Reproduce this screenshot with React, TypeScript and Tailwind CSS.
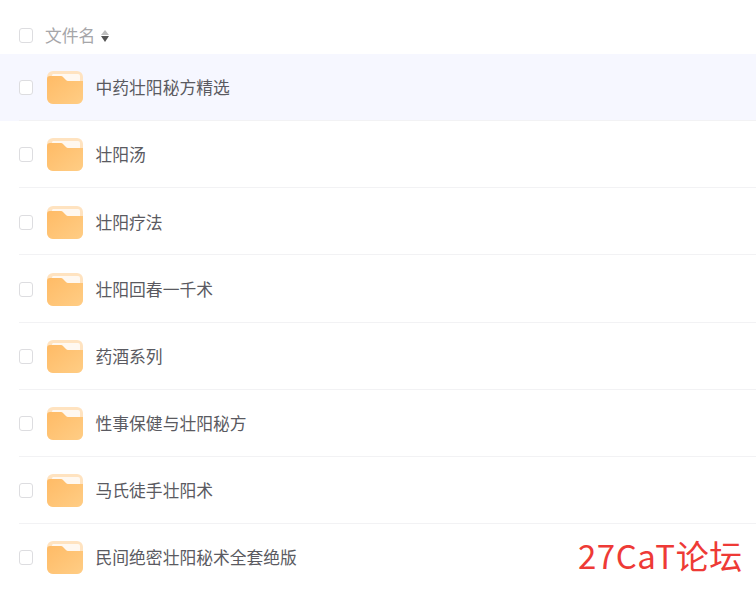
const folders = [
  "中药壮阳秘方精选",
  "壮阳汤",
  "壮阳疗法",
  "壮阳回春一千术",
  "药酒系列",
  "性事保健与壮阳秘方",
  "马氏徒手壮阳术",
  "民间绝密壮阳秘术全套绝版",
];

const FolderIcon = ({ id }: { id: number }) => (
  <svg width="36" height="33" viewBox="0 0 36 33" className="block shrink-0">
    <defs>
      <linearGradient id={`folder-${id}`} x1="0" y1="0" x2="1" y2="1">
        <stop offset="0" stopColor="#ffbb66" />
        <stop offset="1" stopColor="#ffcd85" />
      </linearGradient>
    </defs>
    <rect x="0" y="0" width="36" height="33" rx="6" fill="#ffe3c0" />
    <path d="M6 3 h25 a2 2 0 0 1 2 2 v5 h-28 v-5 a2 2 0 0 1 1 -2 z" fill="#fff8f0" />
    <path
      d="M0 8 a3 3 0 0 1 3 -3 h11 a3 3 0 0 1 2 1 l3 3 a3 3 0 0 0 2 1 h15 v17 a6 6 0 0 1 -6 6 h-24 a6 6 0 0 1 -6 -6 z"
      fill={`url(#folder-${id})`}
    />
  </svg>
);

const Checkbox = () => (
  <span className="w-[14px] h-[15px] shrink-0 rounded-[3px] border border-[#dddde0] bg-white" />
);

export default function App() {
  return (
    <div className="relative w-[756px] h-[596px] overflow-hidden bg-white font-['Noto_Sans_CJK_SC','Liberation_Sans',sans-serif] text-[16.8px]">
      <div className="h-[54px] pl-[19px] pt-[17px] flex items-center">
        <Checkbox />
        <span className="ml-[12px] text-[#a6a6a9]">文件名</span>
        <span className="ml-[6px] flex flex-col gap-[1px]">
          <span className="w-0 h-0 border-x-[4.5px] border-x-transparent border-b-[5px] border-b-[#bdbdbd]" />
          <span className="w-0 h-0 border-x-[4.5px] border-x-transparent border-t-[6px] border-t-[#555555]" />
        </span>
      </div>
      {folders.map((name, i) => (
        <div key={name} className={`pl-[19px] ${i === 0 ? "bg-[#f6f7ff]" : ""}`}>
          <div
            className={`h-[67.14px] pt-[1.6px] flex items-center border-b ${
              i === folders.length - 1 ? "border-transparent" : "border-[#f2f2f4]"
            }`}
          >
            <Checkbox />
            <span className="ml-[14px]">
              <FolderIcon id={i} />
            </span>
            <span className="ml-[12.5px] text-[#5a5a61]">{name}</span>
          </div>
        </div>
      ))}
      <div className="absolute left-[578px] top-[532px] text-[33px] leading-[46px] tracking-[0.5px] text-[#ee3a36]">
        27CaT论坛
      </div>
    </div>
  );
}
